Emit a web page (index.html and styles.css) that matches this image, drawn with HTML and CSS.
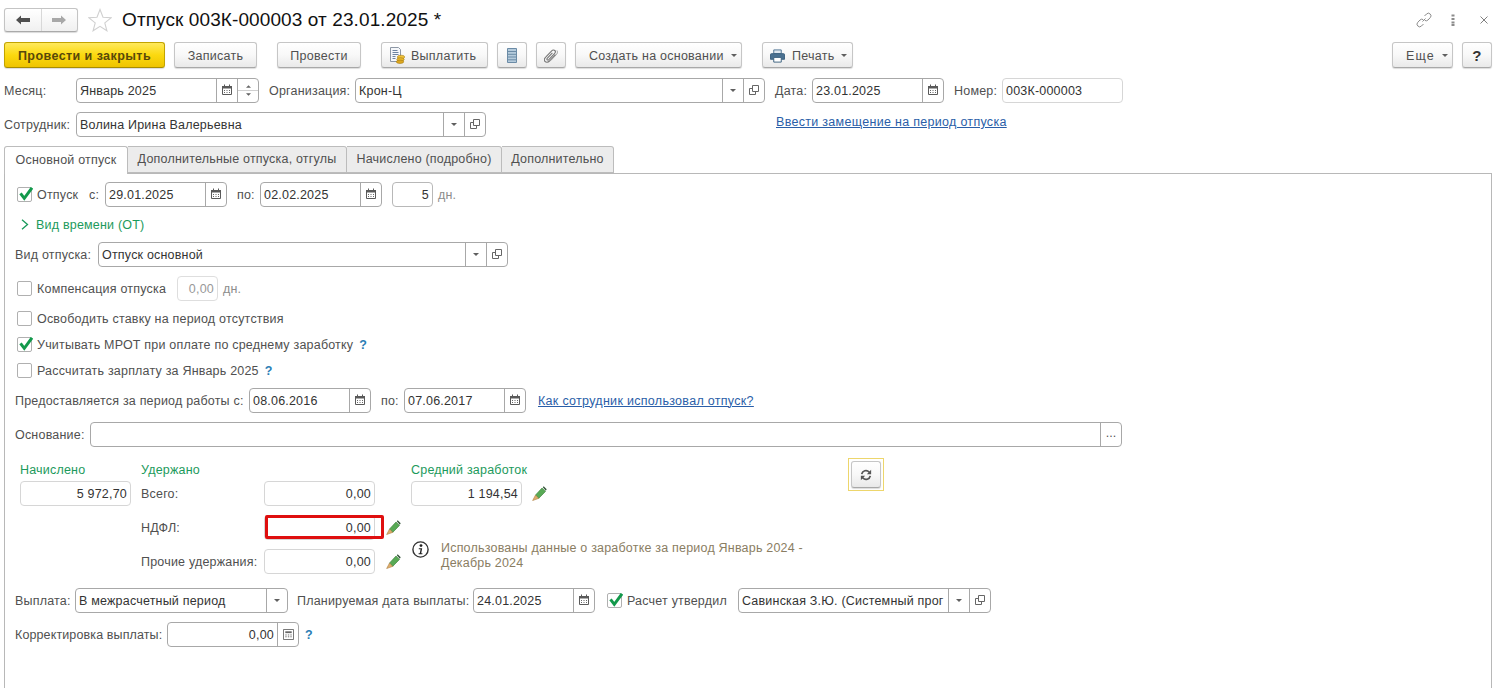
FILE: index.html
```html
<!DOCTYPE html>
<html lang="ru">
<head>
<meta charset="utf-8">
<title>Отпуск 003К-000003</title>
<link rel="stylesheet" href="styles.css">
</head>
<body>
<svg class="defs" width="0" height="0" aria-hidden="true">
  <symbol id="cal" viewBox="0 0 10 11"><path d="M.5 2.500h9v8h-9z" fill="#fff" stroke="#5a5a5a"/><path d="M0 2h10v2.500H0z" fill="#5a5a5a"/><path d="M2.500 .5v2M7.500 .5v2" stroke="#5a5a5a"/><path d="M2 6.500h1M4.500 6.500h1M7 6.500h1M2 8.500h1M4.500 8.500h1M7 8.500h1" stroke="#666"/></symbol>
  <symbol id="caret" viewBox="0 0 6 3"><path d="M0 0h6L3 3z" fill="#5f5f5f"/></symbol>
  <symbol id="open" viewBox="0 0 10 10"><path d="M3.500.5h6v6h-6z" fill="#fff" stroke="#666"/><path d="M3.500 3.500h-3v6h6v-3" fill="none" stroke="#666"/></symbol>
  <symbol id="check" viewBox="0 0 16 15"><path d="M3.500 6.300l3.800 5L15 .8" fill="none" stroke="#12994b" stroke-width="3"/></symbol>
  <symbol id="pencil" viewBox="0 0 15 15"><path d="M3.500 9l6.500-7 3.500 3.400-6.800 7z" fill="#58aa55" stroke="#3b7d3a" stroke-width=".6"/><path d="M10.800 1.200l.9-.9 3 3-.9 1.500z" fill="#35553a"/><path d="M3.500 9l3.200 3.400L.6 14.600z" fill="#dcae6c" stroke="#a9773a" stroke-width=".5"/></symbol>
</svg>

<div class="page">
  <header class="head">
    <div class="nav">
      <span class="nav-btn"><svg width="16" height="10" viewBox="0 0 16 10"><path d="M1 5l5-4.500V3h9v4H6v2.500z" fill="#4f4f4f"/></svg></span>
      <span class="nav-btn nav-next"><svg width="16" height="10" viewBox="0 0 16 10"><path d="M15 5l-5-4.500V3H1v4h9v2.500z" fill="#a8a8a8"/></svg></span>
    </div>
    <svg class="star" width="24" height="24" viewBox="0 0 24 24"><path d="M12 1.500l3 7.800 8 .5-6.200 5.100 2.100 7.900-6.900-4.500-6.900 4.500 2.100-7.900L1 9.800l8-.5z" fill="#fff" stroke="#d0d0d0" stroke-width="1.100"/></svg>
    <h1 class="title">Отпуск 003К-000003 от 23.01.2025 *</h1>
    <div class="win-tools">
      <svg width="16" height="16" viewBox="0 0 16 16"><path d="M6.500 9.500l3-3M8.500 4l2-2a2.600 2.600 0 0 1 3.700 3.700L12 8a2.600 2.600 0 0 1-3.200.4M7.500 12l-2 2a2.600 2.600 0 0 1-3.700-3.700L4 8a2.600 2.600 0 0 1 3.200-.4" fill="none" stroke="#8c8c8c"/></svg>
      <svg class="tool-dots" width="4" height="12" viewBox="0 0 4 12"><path d="M.5.500h3v2h-3zM.5 4h3v2h-3zM.5 7.500h3v2h-3zM.5 10h3v2h-3z" fill="#8c8c8c"/></svg>
      <svg class="tool-x" width="8" height="8" viewBox="0 0 8 8"><path d="M.5.500l7 7M7.500.5l-7 7" stroke="#808080"/></svg>
    </div>
  </header>

  <nav class="toolbar">
    <button class="btn btn-primary w161">Провести и закрыть</button>
    <button class="btn w83 ml9">Записать</button>
    <button class="btn w84 ml20">Провести</button>
    <button class="btn btn-left pl7 w107 ml20">
      <svg class="btn-ico" width="16" height="17" viewBox="0 0 16 17"><path d="M1.500.5h8l2 2v12h-10z" fill="#f5f7fa" stroke="#8d97a5"/><path d="M3.500 3.500h5M3.500 5.500h6M3.500 7.500h6M3.500 9.500h3M3.500 11.500h3" stroke="#6e84a0"/><ellipse cx="12" cy="10" rx="3.700" ry="1.800" fill="#f0c33a" stroke="#a67c12" stroke-width=".6"/><ellipse cx="11.500" cy="12.500" rx="3.700" ry="1.800" fill="#e8b52b" stroke="#a67c12" stroke-width=".6"/><ellipse cx="11" cy="14.800" rx="3.700" ry="1.700" fill="#dda71f" stroke="#a67c12" stroke-width=".6"/></svg>
      Выплатить
    </button>
    <button class="btn w30 ml9" aria-label="Список"><svg width="10" height="15" viewBox="0 0 10 15"><path d="M.5.500h9v14h-9z" fill="#b5cbdc" stroke="#6b8ba6"/><path d="M.5 3.500h9M.5 6.300h9M.5 9h9M.5 11.800h9" stroke="#6b8ba6"/></svg></button>
    <button class="btn w30 ml9" aria-label="Вложения"><svg width="14" height="16" viewBox="0 0 14 16"><path d="M11.500 6.500l-6 6.500c-1.500 1.500-3.500 1.500-4.500.4s-.8-2.800.7-4.300l6-6.300c1-1 2.300-1.100 3.100-.3s.7 2.100-.3 3.100l-5.700 6c-.5.500-1.200.6-1.600.2s-.3-1.100.2-1.600l5-5.300" fill="none" stroke="#777" stroke-width="1.100"/><path d="M13 2.500c.8 1.500.3 3-.5 4l-5.700 6" fill="none" stroke="#999"/></svg></button>
    <button class="btn btn-left pl13 w167 ml9">Создать на основании<svg class="caret" width="6" height="3"><use href="#caret"/></svg></button>
    <button class="btn btn-left pl7 w91 ml20">
      <svg class="btn-ico ico-print" width="15" height="14" viewBox="0 0 16 14"><path d="M4 .5h8v4H4z" fill="#dfe8f0" stroke="#4f7392"/><path d="M1.500 4.500h13a1 1 0 0 1 1 1v5h-15v-5a1 1 0 0 1 1-1z" fill="#4a7191" stroke="#3a5f7e"/><path d="M4 8.500h8v5H4z" fill="#fff" stroke="#3a5f7e"/></svg>
      Печать<svg class="caret" width="6" height="3"><use href="#caret"/></svg>
    </button>
    <button class="btn btn-left btn-more pl14 w61 push">Еще<svg class="caret" width="6" height="3"><use href="#caret"/></svg></button>
    <button class="btn btn-help w30 ml9">?</button>
  </nav>

  <div class="row mt10">
    <label class="lbl w72">Месяц:</label>
    <div class="field w183"><span class="val">Январь 2025</span><span class="fbtn"><svg class="ico-up" width="10" height="11"><use href="#cal"/></svg></span><span class="fspin"><svg width="5" height="3" viewBox="0 0 6 3"><path d="M0 3h6L3 0z" fill="#666"/></svg><svg width="5" height="3"><use href="#caret"/></svg></span></div>
    <label class="lbl ml10 w86">Организация:</label>
    <div class="field w410"><span class="val">Крон-Ц</span><span class="fbtn"><svg width="6" height="3"><use href="#caret"/></svg></span><span class="fbtn"><svg class="ico-up" width="10" height="10"><use href="#open"/></svg></span></div>
    <label class="lbl ml10 w37">Дата:</label>
    <div class="field w132"><span class="val">23.01.2025</span><span class="fbtn"><svg class="ico-up" width="10" height="11"><use href="#cal"/></svg></span></div>
    <label class="lbl ml10 w48">Номер:</label>
    <div class="field field-ro w121"><span class="val">003К-000003</span></div>
  </div>

  <div class="row mt9">
    <label class="lbl w72">Сотрудник:</label>
    <div class="field w410"><span class="val">Волина Ирина Валерьевна</span><span class="fbtn"><svg width="6" height="3"><use href="#caret"/></svg></span><span class="fbtn"><svg class="ico-up" width="10" height="10"><use href="#open"/></svg></span></div>
    <a class="link link-up ml290" href="#">Ввести замещение на период отпуска</a>
  </div>

  <div class="tabs">
    <div class="tab tab-active w124">Основной отпуск</div>
    <div class="tab w219">Дополнительные отпуска, отгулы</div>
    <div class="tab w155">Начислено (подробно)</div>
    <div class="tab w112">Дополнительно</div>
  </div>

  <main class="panel">
    <div class="row">
      <span class="cb ml2"><svg width="16" height="15"><use href="#check"/></svg></span>
      <label class="lbl ml5 w52">Отпуск</label>
      <label class="lbl w16">с:</label>
      <div class="field w122"><span class="val">29.01.2025</span><span class="fbtn"><svg class="ico-up" width="10" height="11"><use href="#cal"/></svg></span></div>
      <label class="lbl ml10 w23">по:</label>
      <div class="field w122"><span class="val">02.02.2025</span><span class="fbtn"><svg class="ico-up" width="10" height="11"><use href="#cal"/></svg></span></div>
      <div class="field field-mid ml10 w41"><span class="val num">5</span></div>
      <span class="unit ml5">дн.</span>
    </div>

    <div class="row mt5">
      <svg class="chev" width="8" height="11" viewBox="0 0 8 11"><path d="M1 .8l5.500 4.700L1 10.200" fill="none" stroke="#189a5a" stroke-width="1.300"/></svg>
      <span class="group-title ml7">Вид времени (ОТ)</span>
    </div>

    <div class="row mt5">
      <label class="lbl w83">Вид отпуска:</label>
      <div class="field w410"><span class="val">Отпуск основной</span><span class="fbtn"><svg width="6" height="3"><use href="#caret"/></svg></span><span class="fbtn"><svg class="ico-up" width="10" height="10"><use href="#open"/></svg></span></div>
    </div>

    <div class="row mt9">
      <span class="cb ml2"></span>
      <label class="lbl ml5 w140">Компенсация отпуска</label>
      <div class="field field-off w41"><span class="val num">0,00</span></div>
      <span class="unit ml5">дн.</span>
    </div>

    <div class="row mt5">
      <span class="cb ml2"></span>
      <label class="lbl ml5">Освободить ставку на период отсутствия</label>
    </div>

    <div class="row mt1">
      <span class="cb ml2"><svg width="16" height="15"><use href="#check"/></svg></span>
      <label class="lbl ml5">Учитывать МРОТ при оплате по среднему заработку</label>
      <span class="help ml6">?</span>
    </div>

    <div class="row mt1">
      <span class="cb ml2"></span>
      <label class="lbl ml5">Рассчитать зарплату за Январь 2025</label>
      <span class="help ml6">?</span>
    </div>

    <div class="row mt5">
      <label class="lbl w234">Предоставляется за период работы с:</label>
      <div class="field w122"><span class="val">08.06.2016</span><span class="fbtn"><svg class="ico-up" width="10" height="11"><use href="#cal"/></svg></span></div>
      <label class="lbl ml10 w23">по:</label>
      <div class="field w122"><span class="val">07.06.2017</span><span class="fbtn"><svg class="ico-up" width="10" height="11"><use href="#cal"/></svg></span></div>
      <a class="link ml12" href="#">Как сотрудник использовал отпуск?</a>
    </div>

    <div class="row mt9">
      <label class="lbl w75">Основание:</label>
      <div class="field w1032"><span class="val"></span><span class="fbtn fbtn-dots">...</span></div>
    </div>

    <section class="totals">
      <div class="group-title c1 r1">Начислено</div>
      <div class="group-title c2 r1">Удержано</div>
      <div class="group-title c3 r1">Средний заработок</div>
      <div class="refresh-frame cr">
        <button class="btn refresh" aria-label="Обновить"><svg width="12" height="12" viewBox="0 0 14 14"><path d="M2 6a5 5 0 0 1 8.600-2.500L12 5" fill="none" stroke="#555" stroke-width="2"/><path d="M13 1v5H8z" fill="#555"/><path d="M12 8a5 5 0 0 1-8.600 2.500L2 9" fill="none" stroke="#555" stroke-width="2"/><path d="M1 13V8h5z" fill="#555"/></svg></button>
      </div>

      <div class="field field-ro w111 c1 r2"><span class="val num">5 972,70</span></div>
      <label class="lbl c2 r2">Всего:</label>
      <div class="field field-ro w111 c2b r2"><span class="val num">0,00</span></div>
      <div class="avg c3 r2">
        <div class="field field-ro w111"><span class="val num">1 194,54</span></div>
        <svg class="ml10" width="15" height="15"><use href="#pencil"/></svg>
      </div>

      <label class="lbl c2 r3">НДФЛ:</label>
      <div class="ndfl w111 c2b r3">
        <div class="field field-ro w111"><span class="val num">0,00</span></div>
        <div class="red-mark"></div>
      </div>
      <svg class="c2p r3 pencil" width="15" height="15"><use href="#pencil"/></svg>

      <label class="lbl c2 r4">Прочие удержания:</label>
      <div class="field field-ro w111 c2b r4"><span class="val num">0,00</span></div>
      <svg class="c2p r4 pencil" width="15" height="15"><use href="#pencil"/></svg>

      <div class="note">
        <svg width="17" height="17" viewBox="0 0 17 17"><circle cx="8.500" cy="8.500" r="7.600" fill="#fff" stroke="#333" stroke-width="1.400"/><circle cx="9" cy="4.600" r="1.400" fill="#222"/><path d="M6.800 7.300h3.400L9.200 12.300h1.200v.9H6.600v-.9h1.200l.8-4.100H6.800z" fill="#222"/></svg>
        <p class="note-text">Использованы данные о заработке за период Январь 2024 -<br>Декабрь 2024</p>
      </div>
    </section>

    <div class="row mt14">
      <label class="lbl w60">Выплата:</label>
      <div class="field w213"><span class="val">В межрасчетный период</span><span class="fbtn"><svg width="6" height="3"><use href="#caret"/></svg></span></div>
      <label class="lbl ml9 w176">Планируемая дата выплаты:</label>
      <div class="field w122"><span class="val">24.01.2025</span><span class="fbtn"><svg class="ico-up" width="10" height="11"><use href="#cal"/></svg></span></div>
      <span class="cb ml12"><svg width="16" height="15"><use href="#check"/></svg></span>
      <label class="lbl ml5 w111">Расчет утвердил</label>
      <div class="field w253"><span class="val">Савинская З.Ю. (Системный прог</span><span class="fbtn"><svg width="6" height="3"><use href="#caret"/></svg></span><span class="fbtn"><svg class="ico-up" width="10" height="10"><use href="#open"/></svg></span></div>
    </div>

    <div class="row mt9">
      <label class="lbl lbl-tight w152">Корректировка выплаты:</label>
      <div class="field w132"><span class="val num">0,00</span><span class="fbtn"><svg width="11" height="11" viewBox="0 0 12 12"><path d="M.5.500h11v11H.5z" fill="#fff" stroke="#666"/><path d="M2.500 2.500h7v2h-7z" fill="#666"/><path d="M2.500 6.500h1.500M5.300 6.500h1.500M8 6.500h1.500M2.500 8.500h1.500M5.300 8.500h1.500M8 8.500h1.500" stroke="#666"/></svg></span></div>
      <span class="help ml6">?</span>
    </div>
  </main>
</div>
</body>
</html>
```

FILE: styles.css
```css
* { box-sizing: border-box; }
html, body { margin: 0; height: 100%; overflow: hidden; background: #fff; }
body { font-family: "Liberation Sans", Arial, sans-serif; font-size: 12.5px; color: #4a4a4a; }
.defs { position: absolute; }
svg { display: block; flex: none; }

.page { display: flex; flex-direction: column; height: 100vh; padding: 8px 6px 0 4px; }

.head { display: flex; align-items: center; height: 24px; flex: none; }
.nav { display: flex; width: 74px; height: 24px; border: 1px solid #c4c4c4; border-bottom-color: #aaa; border-radius: 3px; background: linear-gradient(#fff, #f0f0f0); box-shadow: 0 1px 1px rgba(0,0,0,.15); }
.nav-btn { display: flex; align-items: center; justify-content: center; flex: 1; }
.nav-next { border-left: 1px solid #d8d8d8; }
.star { margin-left: 10px; }
.title { margin: 0 0 0 10px; font-size: 19px; font-weight: 400; color: #111; white-space: nowrap; letter-spacing: .1px; }
.win-tools { display: flex; align-items: center; margin-left: auto; margin-right: 4px; }
.tool-dots { margin-left: 19px; }
.tool-x { margin-left: 25px; }

.toolbar { display: flex; margin-top: 10px; height: 26px; flex: none; }
.btn { display: flex; align-items: center; justify-content: center; height: 26px; padding: 1px 0 0; border: 1px solid #c6c6c6; border-bottom-color: #a8a8a8; border-radius: 3px; background: linear-gradient(#fff 0%, #f8f8f8 50%, #e9e9e9 100%); box-shadow: 0 1px 1px rgba(0,0,0,.14); font: 12.5px "Liberation Sans", Arial, sans-serif; letter-spacing: .25px; color: #505050; white-space: nowrap; }
.btn-left { justify-content: flex-start; }
.btn-primary { border-color: #c2a400; border-bottom-color: #a88d00; background: linear-gradient(#ffe95c 0%, #fbd90f 50%, #efc400 100%); font-weight: 700; color: #57480a; letter-spacing: .43px; }
.btn-help { font-size: 15px; font-weight: 700; color: #333; }
.btn-more { letter-spacing: 1.1px; }
.btn-ico { margin-right: 6px; }
.ico-print { margin-right: 7px; }
.caret { margin-left: 7px; }
.push { margin-left: auto; }
.pl7 { padding-left: 7px; } .pl13 { padding-left: 13px; } .pl14 { padding-left: 13px; }

.row { display: flex; align-items: center; height: 25px; flex: none; }
.lbl { flex: none; white-space: nowrap; letter-spacing: .2px; color: #505050; }
.lbl-tight { letter-spacing: .12px; }

.field { display: flex; align-items: stretch; flex: none; height: 25px; border: 1px solid #a8a8a8; border-radius: 4px; background: #fff; }
.field-ro { border-color: #d6d6d6; }
.field-mid { border-color: #b8b8b8; }
.field-off { border-color: #dedede; }
.field-off .val { color: #999; }
.val { flex: 1; min-width: 0; padding: 0 3px; line-height: 25px; color: #333; letter-spacing: .2px; white-space: nowrap; overflow: hidden; }
.num { text-align: right; }
.fbtn { display: flex; align-items: center; justify-content: center; flex: none; width: 21px; border-left: 1px solid #a8a8a8; }
.ico-up { margin-top: -2px; }
.fbtn-dots { align-items: flex-start; line-height: 20px; color: #555; }
.fspin { display: flex; flex-direction: column; align-items: center; justify-content: space-around; flex: none; width: 21px; padding: 3px 0; border-left: 1px solid #a8a8a8; position: relative; }
.fspin::after { content: ""; position: absolute; left: 0; right: 0; top: 11px; border-top: 1px solid #d0d0d0; }

.link { color: #2a5ea8; text-decoration: underline; white-space: nowrap; letter-spacing: .3px; }
.link-up { align-self: flex-start; line-height: 20px; }
.unit { color: #8c8c8c; letter-spacing: .2px; }
.help { color: #2a7db5; font-weight: 700; }
.group-title { color: #1c9a5c; letter-spacing: .2px; white-space: nowrap; }
.chev { margin-left: 6px; }

.tabs { display: flex; height: 27px; margin-top: 9px; flex: none; position: relative; z-index: 1; }
.tab { display: flex; align-items: center; justify-content: center; height: 27px; padding-bottom: 1px; border: 1px solid #bcbcbc; border-left: 0; border-radius: 0 3px 0 0; background: #ececec; letter-spacing: .2px; color: #505050; white-space: nowrap; }
.tab-active { height: 28px; border-left: 1px solid #bcbcbc; border-bottom: 0; border-radius: 3px 3px 0 0; background: #fff; padding-bottom: 2px; }

.panel { flex: 1; min-height: 0; padding: 8px 0 0 10px; border: 1px solid #b8b8b8; border-bottom: 0; }
.cb { display: flex; width: 15px; height: 15px; flex: none; border: 1px solid #b0b0b0; border-radius: 2px; background: #fff; }
.cb svg { margin: -1px 0 0 -1px; }

.totals { display: grid; margin: 11px 0 0 5px; grid-template-columns: 121px 123px 111px 36px 438px 36px; grid-template-rows: 23px 34px 34px 25px; }
.totals > * { align-self: start; }
.totals .lbl { line-height: 27px; }
.r1 { grid-row: 1; align-self: end !important; margin-bottom: 4px; }
.r2 { grid-row: 2; }
.r3 { grid-row: 3; }
.r4 { grid-row: 4; }
.c1 { grid-column: 1; }
.c2 { grid-column: 2; }
.c2b { grid-column: 3; }
.c2p { grid-column: 4; }
.c3 { grid-column: 3 / span 3; margin-left: 147px; }
.pencil { margin: 5px 0 0 11px; }
.avg { display: flex; align-items: center; }
.cr { grid-column: 6; grid-row: 1 / span 2; margin-left: -1px; }
.refresh-frame { display: flex; align-items: center; justify-content: center; width: 36px; height: 33px; border: 1px solid #edd66c; }
.refresh { width: 30px; height: 27px; }
.ndfl { position: relative; height: 25px; }
.red-mark { position: absolute; left: 1px; top: 0; width: 119px; height: 24px; border: 3px solid #df0f0f; border-radius: 2px; }
.note { grid-column: 3 / span 3; grid-row: 3 / span 2; display: flex; margin: 26px 0 0 148px; }
.note svg { margin-right: 12px; }
.note-text { margin: 0; line-height: 15px; color: #8a7d62; letter-spacing: .2px; white-space: nowrap; }

.mt1 { margin-top: 1px; } .mt5 { margin-top: 5px; } .mt9 { margin-top: 9px; } .mt10 { margin-top: 10px; } .mt14 { margin-top: 14px; }
.ml2 { margin-left: 2px; } .ml5 { margin-left: 5px; } .ml6 { margin-left: 6px; } .ml7 { margin-left: 7px; } .ml9 { margin-left: 9px; } .ml10 { margin-left: 10px; } .ml12 { margin-left: 12px; } .ml20 { margin-left: 20px; } .ml290 { margin-left: 290px; }
.w16 { width: 16px; } .w23 { width: 23px; } .w30 { width: 30px; } .w37 { width: 37px; } .w41 { width: 41px; } .w48 { width: 48px; } .w52 { width: 52px; } .w60 { width: 60px; } .w61 { width: 61px; } .w72 { width: 72px; } .w75 { width: 75px; } .w83 { width: 83px; } .w84 { width: 84px; } .w86 { width: 86px; } .w91 { width: 91px; } .w107 { width: 107px; } .w111 { width: 111px; } .w112 { width: 112px; } .w121 { width: 121px; } .w122 { width: 122px; } .w124 { width: 124px; } .w132 { width: 132px; } .w140 { width: 140px; } .w152 { width: 152px; } .w155 { width: 155px; } .w161 { width: 161px; } .w167 { width: 167px; } .w176 { width: 176px; } .w183 { width: 183px; } .w213 { width: 213px; } .w219 { width: 219px; } .w234 { width: 234px; } .w253 { width: 253px; } .w410 { width: 410px; } .w1032 { width: 1032px; }
```
